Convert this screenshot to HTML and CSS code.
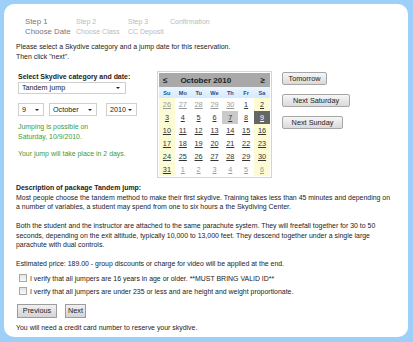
FILE: index.html
```html
<!DOCTYPE html>
<html>
<head>
<meta charset="utf-8">
<link rel="stylesheet" href="styles.css">
</head>
<body>
<div class="panel">
  <div class="steps">
    <div class="step active"><div class="num">Step 1</div><div>Choose Date</div></div>
    <div class="step"><div class="num">Step 2</div><div>Choose Class</div></div>
    <div class="step"><div class="num">Step 3</div><div>CC Deposit</div></div>
    <div class="step"><div class="num">Confirmation</div></div>
  </div>

  <p class="intro">Please select a Skydive category and a jump date for this reservation.<br>Then click "next".</p>

  <div class="form">
    <div class="left">
      <div class="lbl">Select Skydive category and date:</div>
      <span class="sel w-cat"><select><option>Tandem jump</option></select></span>
      <div class="daterow">
        <span class="sel w-day"><select><option>9</option></select></span>
        <span class="sel w-mon"><select><option>October</option></select></span>
        <span class="sel w-yr"><select><option>2010</option></select></span>
      </div>
      <p class="ok">Jumping is possible on<br>Saturday, 10/9/2010.</p>
      <p class="ok ok2">Your jump will take place in 2 days.</p>
    </div>

    <div class="cal">
      <div class="cal-head">
        <span class="nav-arrow">≤</span>
        <span class="title">October 2010</span>
        <span class="nav-arrow">≥</span>
      </div>
      <table class="grid">
        <thead>
          <tr><th>Su</th><th>Mo</th><th>Tu</th><th>We</th><th>Th</th><th>Fr</th><th>Sa</th></tr>
        </thead>
        <tbody>
          <tr><td class="we other">26</td><td class="other">27</td><td class="other">28</td><td class="other">29</td><td class="other">30</td><td>1</td><td class="we">2</td></tr>
          <tr><td class="we">3</td><td>4</td><td>5</td><td>6</td><td class="today">7</td><td>8</td><td class="we sel-day">9</td></tr>
          <tr><td class="we">10</td><td>11</td><td>12</td><td>13</td><td>14</td><td>15</td><td class="we">16</td></tr>
          <tr><td class="we">17</td><td>18</td><td>19</td><td>20</td><td>21</td><td>22</td><td class="we">23</td></tr>
          <tr><td class="we">24</td><td>25</td><td>26</td><td>27</td><td>28</td><td>29</td><td class="we">30</td></tr>
          <tr><td class="we">31</td><td class="other">1</td><td class="other">2</td><td class="other">3</td><td class="other">4</td><td class="other">5</td><td class="we other">6</td></tr>
        </tbody>
      </table>
    </div>

    <div class="quick">
      <button class="btn b-tom">Tomorrow</button>
      <button class="btn b-sat">Next Saturday</button>
      <button class="btn b-sun">Next Sunday</button>
    </div>
  </div>

  <div class="desc">
    <p><b>Description of package Tandem jump:</b><br>Most people choose the tandem method to make their first skydive. Training takes less than 45 minutes and depending on a number of variables, a student may spend from one to six hours a the Skydiving Center.</p>
    <p>Both the student and the instructor are attached to the same parachute system. They will freefall together for 30 to 50 seconds, depending on the exit altitude, typically 10,000 to 13,000 feet. They descend together under a single large parachute with dual controls.</p>
    <p>Estimated price: 189.00 - group discounts or charge for video will be applied at the end.</p>
  </div>

  <div class="checks">
    <label class="chk"><input type="checkbox"><span>I verify that all jumpers are 16 years in age or older. **MUST BRING VALID ID**</span></label>
    <label class="chk"><input type="checkbox"><span>I verify that all jumpers are under 235 or less and are height and weight proportionate.</span></label>
  </div>

  <div class="navrow">
    <button class="btn2 b-prev">Previous</button>
    <button class="btn2 b-next">Next</button>
  </div>

  <p class="foot">You will need a credit card number to reserve your skydive.</p>
</div>
</body>
</html>
```

FILE: styles.css
```css
html, body {
  margin: 0;
  padding: 0;
}
body {
  background: #9dcff9;
  padding: 4px 5px 5px 4px;
  font-family: "Liberation Sans", Arial, sans-serif;
  font-size: 6.95px;
  color: #222;
}
p { margin: 0; }

.panel {
  background: #fff;
  border-radius: 10px;
  height: 333px;
  box-sizing: border-box;
  padding: 13px 10px 0 12px;
}

/* steps */
.steps {
  display: flex;
  margin-left: 9px;
  line-height: 10px;
  color: #bbb;
  font-size: 7px;
}
.step:nth-child(1) { width: 51px; }
.step:nth-child(2) { width: 52px; }
.step:nth-child(3) { width: 42px; }
.step.active {
  color: #777;
  font-size: 7.8px;
}

.intro {
  margin-top: 5px;
  line-height: 10px;
}

/* form area */
.form {
  display: flex;
  margin-top: 9px;
  align-items: flex-start;
}
.left {
  width: 139px;
  padding-left: 2px;
  padding-top: 1px;
}
.lbl {
  font-weight: bold;
  line-height: 10px;
}
.sel {
  position: relative;
  display: inline-block;
  height: 12px;
  box-sizing: border-box;
  border: 1px solid #cfcfcf;
  background: #fff;
}
.sel select {
  -webkit-appearance: none;
  appearance: none;
  border: 0;
  background: transparent;
  font: inherit;
  font-size: 7.2px;
  color: #222;
  height: 10px;
  line-height: 10px;
  padding: 0 0 0 3px;
  width: 100%;
  display: block;
  outline: none;
}
.sel::after {
  content: "";
  position: absolute;
  right: 5px;
  top: 4px;
  border-left: 2px solid transparent;
  border-right: 2px solid transparent;
  border-top: 2px solid #222;
}
.w-cat { width: 108px; }
.daterow {
  display: flex;
  margin-top: 9px;
}
.daterow .sel { height: 13px; }
.daterow .sel select { height: 11px; line-height: 11px; }
.daterow .sel::after { top: 5px; right: 4px; }
.w-day { width: 26px; }
.w-mon { width: 48px; margin-left: 5px; }
.w-yr { width: 31px; margin-left: 9px; }

.ok {
  color: #3f9a34;
  line-height: 10px;
  margin-top: 6px;
}
.ok2 { margin-top: 7px; }

/* calendar */
.cal {
  width: 115px;
  box-sizing: border-box;
  border: 1px solid #d4d4d4;
  padding: 1px;
  background: #fff;
}
.cal-head {
  display: flex;
  align-items: center;
  height: 14px;
  background: #a9a9a9;
  padding: 0 5px 0 4px;
  color: #222;
}
.cal-head .nav-arrow {
  font-weight: bold;
  font-size: 8px;
}
.cal-head .title {
  flex: 1;
  font-weight: bold;
  font-size: 8px;
  padding-left: 13px;
}
.grid {
  width: 100%;
  border-collapse: collapse;
  table-layout: fixed;
}
.grid th {
  background: linear-gradient(#eaf5ff, #d6ebff);
  color: #2b4a86;
  font-size: 5.6px;
  font-weight: bold;
  height: 11px;
  padding: 0;
  text-align: center;
}
.grid td {
  height: 13px;
  padding: 0;
  text-align: center;
  font-size: 7.3px;
  color: #333;
  text-decoration: underline;
}
.grid td.we { background: #fdfbd4; }
.grid td.other { color: #9a9a9a; }
.grid td.today { background: #cacaca; }
.grid td.sel-day { background: #666; color: #fff; }

/* quick buttons */
.quick {
  display: flex;
  flex-direction: column;
  align-items: flex-start;
  gap: 9px;
  margin-left: 10px;
  padding-top: 1px;
}
.btn {
  font: inherit;
  font-size: 7.3px;
  color: #222;
  height: 13px;
  padding: 0;
  border: 1px solid #a6a6a6;
  border-radius: 2px;
  background: linear-gradient(#f6f6f6, #dadada);
  line-height: 11px;
}
.b-tom { width: 45px; }
.b-sat { width: 68px; }
.b-sun { width: 61px; }

/* description */
.desc {
  margin-top: 5px;
  line-height: 9.5px;
  padding-right: 6px;
}
.desc p + p { margin-top: 9.5px; }

.checks {
  margin-top: 3px;
  margin-left: 3px;
}
.chk {
  display: flex;
  align-items: center;
  height: 13px;
}
.chk input {
  -webkit-appearance: none;
  appearance: none;
  width: 8px;
  height: 8px;
  margin: 0 3px 0 0;
  border: 1px solid #a8a8a8;
  background: linear-gradient(#e4e4e4, #fafafa);
  box-sizing: border-box;
}

.navrow {
  display: flex;
  gap: 8px;
  margin-top: 6px;
  margin-left: 1px;
}
.btn2 {
  font: inherit;
  font-size: 7.3px;
  color: #222;
  height: 14px;
  padding: 0;
  border: 1px solid #9c9c9c;
  background: linear-gradient(#f0f0f0, #d4d4d4);
  line-height: 12px;
}
.b-prev { width: 40px; }
.b-next { width: 21px; }

.foot {
  margin-top: 5px;
  line-height: 10px;
}
```
